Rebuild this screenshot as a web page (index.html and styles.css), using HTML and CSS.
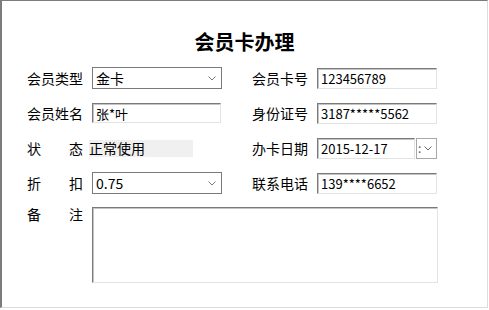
FILE: index.html
```html
<!DOCTYPE html>
<html>
<head>
<meta charset="utf-8" />
<title>会员卡办理</title>
<link rel="stylesheet" href="styles.css">
</head>
<body>
<div class="frame">
	<h1 class="title">会员卡办理</h1>
	<div class="form">
		<span class="lbl">会员类型</span>
		<div class="combo"><span class="val">金卡</span><svg class="arrow" width="8" height="5" viewBox="0 0 8 5"><polyline points="0.5,0.5 4,4 7.5,0.5" fill="none" stroke="#7a7a7a" stroke-width="1"/></svg></div>
		<span class="lbl">会员卡号</span>
		<input class="txt" type="text" value="123456789" />

		<span class="lbl">会员姓名</span>
		<input class="txt txt-l" type="text" value="张*叶" />
		<span class="lbl">身份证号</span>
		<input class="txt" type="text" value="3187*****5562" />

		<span class="lbl lbl-j">状 态</span>
		<span class="state">正常使用</span>
		<span class="lbl">办卡日期</span>
		<div class="date">
			<input class="txt txt-d" type="text" value="2015-12-17" />
			<span class="drop"><i class="dots">:</i><svg width="8" height="5" viewBox="0 0 8 5"><polyline points="0.5,0.5 4,4 7.5,0.5" fill="none" stroke="#6a6a6a" stroke-width="1"/></svg></span>
		</div>

		<span class="lbl lbl-j">折 扣</span>
		<div class="combo"><span class="val">0.75</span><svg class="arrow" width="8" height="5" viewBox="0 0 8 5"><polyline points="0.5,0.5 4,4 7.5,0.5" fill="none" stroke="#7a7a7a" stroke-width="1"/></svg></div>
		<span class="lbl">联系电话</span>
		<input class="txt" type="text" value="139****6652" />

		<span class="lbl lbl-j lbl-top">备 注</span>
		<textarea class="memo"></textarea>
	</div>
</div>
</body>
</html>
```

FILE: styles.css
```css
*{ margin:0; padding:0;}
body{ background:#fff; font-family:"Noto Sans CJK SC", "Liberation Sans", sans-serif; color:#000;}
.frame{ width:488px; height:308px; box-sizing:border-box; border-top:1px solid #7c7c7c; border-left:2px solid #7c7c7c; border-right:1px solid #dcdcdc; border-bottom:1px solid #dcdcdc; padding-top:28px;}
.title{ font-size:20px; line-height:26px; font-weight:bold; text-align:center; margin-bottom:12px;}
.form{ display:grid; grid-template-columns:56px 151px 56px 120px; grid-auto-rows:22px; column-gap:9px; row-gap:13px; padding-left:25px; align-items:center;}
.lbl{ font-size:14px; line-height:22px; white-space:nowrap;}
.lbl-j{ text-align:justify; text-align-last:justify;}
.lbl-top{ align-self:start; line-height:16px; margin-top:-1px;}
.combo{ width:130px; height:22px; box-sizing:border-box; border:1px solid #7a7a7a; display:flex; align-items:center; padding:0 5px 0 3px; background:#fff;}
.combo .val{ font-size:14px; line-height:18px;}
.combo .arrow{ margin-left:auto;}
.txt{ width:120px; height:21px; box-sizing:border-box; border:1px solid; border-color:#7a7a7a #e3e3e3 #e3e3e3 #7a7a7a; box-shadow:inset 1px 1px 0 #c4c4c4; padding:0 3px; font-family:inherit; font-size:13px; color:#000; outline:none; background:#fff;}
.txt-l{ width:129px; height:20px;}
.state{ width:104px; height:17px; margin-left:-3px; background:#f0f0f0; font-size:14px; line-height:16px;}
.date{ display:flex; gap:1px; height:21px;}
.txt-d{ width:98px; height:21px;}
.drop{ width:22px; height:21px; box-sizing:border-box; border:1px solid #a8a8a8; display:flex; align-items:center; gap:3px; padding-left:1px; background:#fff;}
.dots{ font-style:normal; font-size:12px; line-height:12px; color:#555;}
.memo{ grid-column:2 / 5; align-self:start; width:346px; height:76px; box-sizing:border-box; border:1px solid; border-color:#7a7a7a #e3e3e3 #e3e3e3 #7a7a7a; box-shadow:inset 1px 1px 0 #c4c4c4; resize:none; outline:none; background:#fff;}
.form > .memo{ grid-row:span 3;}
```
